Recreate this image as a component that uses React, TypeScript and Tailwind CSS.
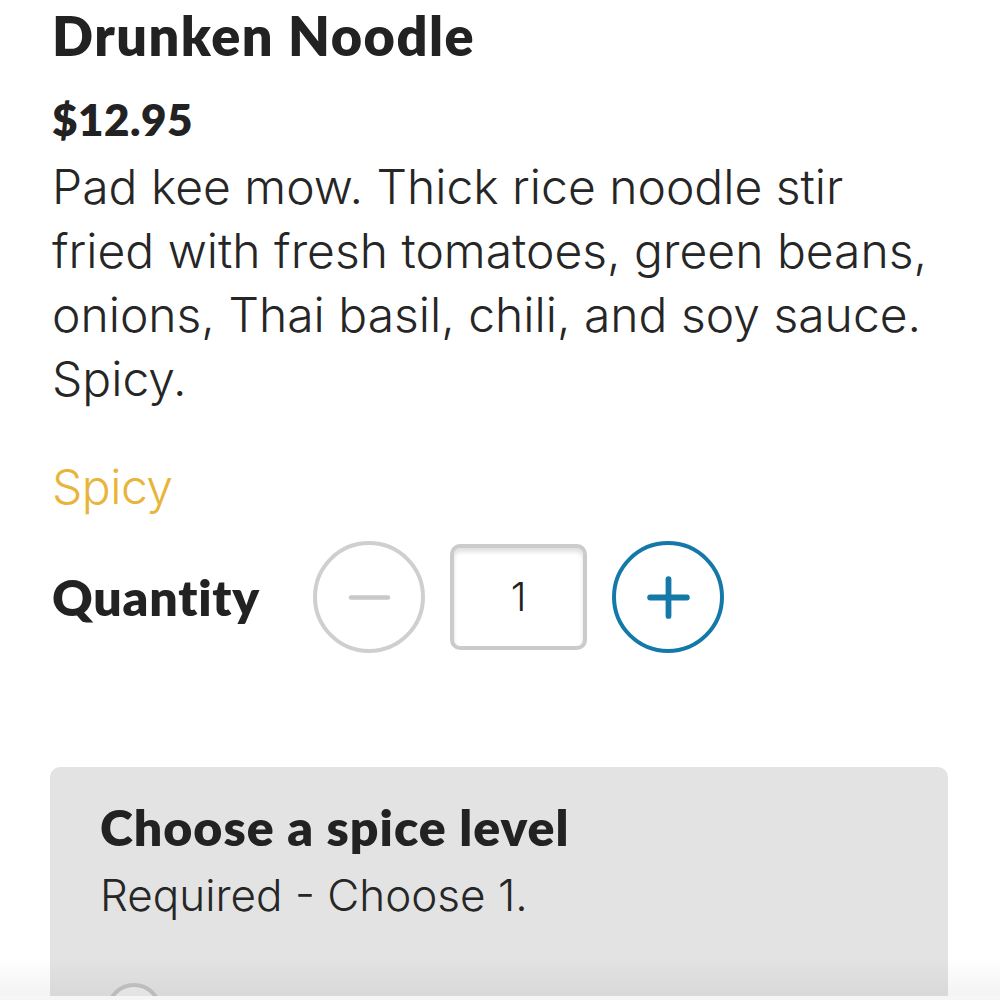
import { Minus, Plus } from "lucide-react";

export default function App() {
  return (
    <div className="relative h-[1000px] w-[1000px] overflow-hidden bg-white font-['Lato',sans-serif] text-[#222222]">
      <div className="pl-[52px] pr-[52px] pt-[4px]">
        <h1 className="text-[54px] font-extrabold leading-[64px] tracking-[1.5px]">Drunken Noodle</h1>
        <div className="mt-[25px] text-[44px] font-extrabold leading-[52px] tracking-[0.5px]">$12.95</div>
        <p className="mt-[10px] w-[890px] font-['Inter',sans-serif] text-[48px] font-light leading-[64px] text-[#262626]">
          Pad kee mow. Thick rice noodle stir fried with fresh tomatoes, green beans, onions, Thai basil, chili, and soy sauce. Spicy.
        </p>
        <div className="mt-[44px] font-['Inter',sans-serif] text-[48px] font-light leading-[64px] tracking-[-0.5px] text-[#e8b43a]">Spicy</div>

        <div className="mt-[22px] flex items-center">
          <span className="w-[261px] text-[50px] font-extrabold tracking-[0.8px]">Quantity</span>
          <div className="flex items-center gap-[25px]">
            <button className="flex h-[112px] w-[112px] items-center justify-center rounded-full border-[4px] border-[#cfcfcf] text-[#c8c8c8]">
              <Minus size={63} strokeWidth={1.8} />
            </button>
            <div className="flex h-[106px] w-[137px] items-center justify-center rounded-[10px] border-[4px] border-[#cbcbcb] font-['Inter',sans-serif] text-[40px] font-light shadow-[inset_0_4px_4px_rgba(0,0,0,0.12)]">
              1
            </div>
            <button className="flex h-[112px] w-[112px] items-center justify-center rounded-full border-[4px] border-[#1479a8] text-[#1479a8]">
              <Plus size={63} strokeWidth={2.2} />
            </button>
          </div>
        </div>
      </div>

      <div className="ml-[50px] mt-[114px] w-[898px] rounded-[10px] bg-[#e3e3e3] px-[50px] pb-[40px] pt-[30px]">
        <h2 className="text-[50px] font-extrabold leading-[60px] tracking-[1px]">Choose a spice level</h2>
        <p className="mt-[10px] font-['Inter',sans-serif] text-[44px] font-light leading-[56px] text-[#262626]">Required - Choose 1.</p>
        <div className="ml-[6px] mt-[60px] h-[56px] w-[56px] rounded-full border-[4px] border-[#c4c4c4] bg-[#eeeeee]" />
      </div>

      <div className="pointer-events-none absolute bottom-0 left-0 h-[44px] w-full bg-gradient-to-b from-transparent to-[rgba(0,0,0,0.05)]" />
      <div className="absolute bottom-0 left-0 h-[4px] w-full bg-[#f6f6f6]" />
    </div>
  );
}
